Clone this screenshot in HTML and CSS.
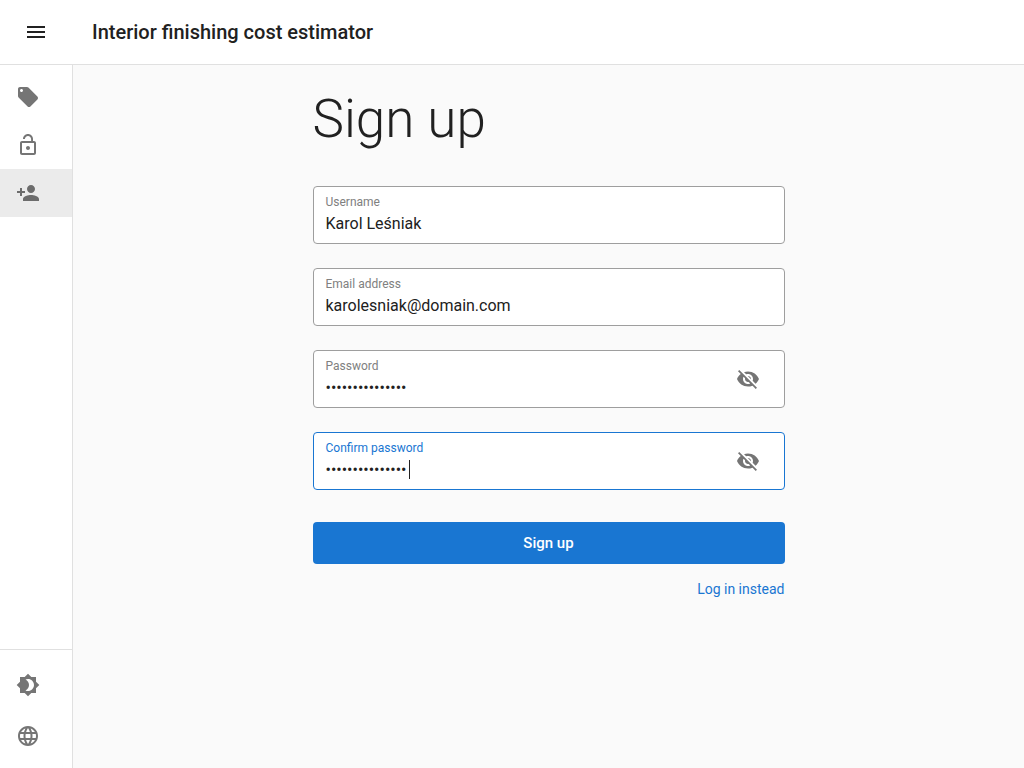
FILE: index.html
```html
<!DOCTYPE html>
<html lang="en">
<head>
<meta charset="utf-8">
<meta name="viewport" content="width=device-width, initial-scale=1">
<title>Interior finishing cost estimator</title>
<link rel="stylesheet" href="styles.css">
</head>
<body>
<header class="topbar">
  <button class="icon-button" type="button" aria-label="Toggle menu">
    <svg class="icon" viewBox="0 0 24 24"><path d="M3 18h18v-2H3v2zm0-5h18v-2H3v2zm0-7v2h18V6H3z"/></svg>
  </button>
  <div class="topbar-title">Interior finishing cost estimator</div>
</header>
<div class="shell">
  <nav class="rail" aria-label="Main">
    <div class="rail-group rail-main">
      <a class="rail-item" href="#prices" aria-label="Prices">
        <svg class="icon" viewBox="0 0 24 24"><path d="M21.41 11.58l-9-9C12.05 2.22 11.55 2 11 2H4c-1.1 0-2 .9-2 2v7c0 .55.22 1.05.59 1.42l9 9c.36.36.86.58 1.41.58s1.05-.22 1.41-.59l7-7c.37-.36.59-.86.59-1.41s-.23-1.06-.59-1.42zM5.5 7C4.67 7 4 6.33 4 5.5S4.67 4 5.5 4 7 4.67 7 5.5 6.33 7 5.5 7z"/></svg>
      </a>
      <a class="rail-item" href="#login" aria-label="Log in">
        <svg class="icon" viewBox="0 0 24 24"><path d="M12 17c1.1 0 2-.9 2-2s-.9-2-2-2-2 .9-2 2 .9 2 2 2zm6-9h-1V6c0-2.76-2.24-5-5-5S7 3.24 7 6h1.900c0-1.710 1.390-3.100 3.100-3.100s3.100 1.390 3.100 3.100v2H6c-1.100 0-2 .9-2 2v10c0 1.100.9 2 2 2h12c1.100 0 2-.9 2-2V10c0-1.100-.9-2-2-2zm0 12H6V10h12v10z"/></svg>
      </a>
      <a class="rail-item rail-item-active" href="#signup" aria-label="Sign up">
        <svg class="icon" viewBox="0 0 24 24"><path d="M15 12c2.210 0 4-1.790 4-4s-1.790-4-4-4-4 1.790-4 4 1.790 4 4 4zm-9-2V7H4v3H1v2h3v3h2v-3h3v-2H6zm9 4c-2.670 0-8 1.340-8 4v2h16v-2c0-2.660-5.330-4-8-4z"/></svg>
      </a>
    </div>
    <div class="rail-group rail-bottom">
      <button class="rail-item" type="button" aria-label="Switch theme">
        <svg class="icon" viewBox="0 0 24 24"><path d="M20 8.690V4h-4.690L12 .690 8.690 4H4v4.690L.690 12 4 15.310V20h4.690L12 23.310 15.310 20H20v-4.690L23.310 12 20 8.690zM12 18c-.890 0-1.740-.200-2.500-.550C11.560 16.500 13 14.420 13 12s-1.440-4.500-3.500-5.450C10.260 6.200 11.110 6 12 6c3.310 0 6 2.690 6 6s-2.690 6-6 6z"/></svg>
      </button>
      <button class="rail-item" type="button" aria-label="Language">
        <svg class="icon" viewBox="0 0 24 24"><path d="M11.990 2C6.470 2 2 6.480 2 12s4.470 10 9.990 10C17.520 22 22 17.520 22 12S17.520 2 11.990 2zm6.930 6h-2.950c-.320-1.250-.780-2.450-1.380-3.560 1.840.630 3.370 1.910 4.330 3.560zM12 4.040c.830 1.200 1.480 2.530 1.910 3.960h-3.820c.430-1.430 1.080-2.760 1.910-3.960zM4.260 14C4.100 13.360 4 12.690 4 12s.100-1.360.260-2h3.380c-.080.660-.140 1.320-.140 2 0 .680.060 1.340.140 2H4.260zm.820 2h2.950c.320 1.250.780 2.450 1.380 3.560-1.840-.630-3.370-1.900-4.330-3.560zm2.950-8H5.080c.960-1.660 2.490-2.930 4.330-3.560C8.810 5.550 8.350 6.750 8.030 8zM12 19.960c-.830-1.200-1.480-2.530-1.910-3.960h3.820c-.430 1.430-1.080 2.760-1.910 3.960zM14.340 14H9.660c-.090-.660-.160-1.320-.160-2 0-.680.070-1.350.160-2h4.680c.090.650.160 1.320.160 2 0 .680-.070 1.340-.160 2zm.250 5.560c.600-1.110 1.060-2.310 1.380-3.560h2.950c-.960 1.650-2.490 2.930-4.330 3.560zM16.360 14c.080-.660.140-1.320.140-2 0-.680-.060-1.340-.140-2h3.380c.160.640.260 1.310.260 2s-.100 1.360-.260 2h-3.380z"/></svg>
      </button>
    </div>
  </nav>
  <main class="content">
    <form class="signup">
      <h1 class="heading">Sign up</h1>
      <div class="field">
        <div class="field-text">
          <label class="field-label" for="username">Username</label>
          <input class="field-input" id="username" type="text" value="Karol Leśniak">
        </div>
      </div>
      <div class="field">
        <div class="field-text">
          <label class="field-label" for="email">Email address</label>
          <input class="field-input" id="email" type="email" value="karolesniak@domain.com">
        </div>
      </div>
      <div class="field">
        <div class="field-text">
          <label class="field-label" for="password">Password</label>
          <input class="field-input" id="password" type="password" value="abcdefghijklmno">
        </div>
        <button class="icon-button icon-button-muted" type="button" aria-label="Show password">
          <svg class="icon" viewBox="0 0 24 24"><path d="M12 7c2.760 0 5 2.240 5 5 0 .650-.130 1.260-.360 1.830l2.920 2.920c1.510-1.260 2.700-2.890 3.430-4.750-1.730-4.390-6-7.500-11-7.500-1.400 0-2.740.250-3.980.700l2.160 2.160C10.740 7.130 11.350 7 12 7zM2 4.270l2.280 2.280.460.460C3.080 8.300 1.780 10.020 1 12c1.730 4.390 6 7.500 11 7.500 1.550 0 3.030-.300 4.380-.840l.420.420L19.730 22 21 20.730 3.270 3 2 4.270zM7.530 9.800l1.550 1.550c-.050.210-.080.430-.080.650 0 1.660 1.340 3 3 3 .220 0 .440-.030.650-.080l1.550 1.550c-.670.330-1.410.530-2.200.530-2.760 0-5-2.240-5-5 0-.790.200-1.530.530-2.200zm4.310-.780l3.150 3.150.020-.160c0-1.660-1.340-3-3-3l-.170.010z"/></svg>
        </button>
      </div>
      <div class="field field-focused">
        <div class="field-text">
          <label class="field-label" for="confirm">Confirm password</label>
          <input class="field-input" id="confirm" type="password" value="abcdefghijklmno" autofocus>
          <span class="caret" id="caret" aria-hidden="true"></span>
        </div>
        <button class="icon-button icon-button-muted" type="button" aria-label="Show password confirmation">
          <svg class="icon" viewBox="0 0 24 24"><path d="M12 7c2.760 0 5 2.240 5 5 0 .650-.130 1.260-.360 1.830l2.920 2.920c1.510-1.260 2.700-2.890 3.430-4.750-1.730-4.390-6-7.500-11-7.500-1.400 0-2.740.250-3.980.700l2.160 2.160C10.740 7.130 11.350 7 12 7zM2 4.270l2.280 2.280.460.460C3.080 8.300 1.780 10.020 1 12c1.730 4.390 6 7.500 11 7.500 1.550 0 3.030-.300 4.380-.840l.420.420L19.730 22 21 20.730 3.270 3 2 4.270zM7.530 9.800l1.550 1.550c-.050.210-.080.430-.080.650 0 1.660 1.340 3 3 3 .220 0 .440-.030.650-.080l1.550 1.550c-.670.330-1.410.530-2.200.530-2.760 0-5-2.240-5-5 0-.790.200-1.530.530-2.200zm4.310-.780l3.150 3.150.020-.160c0-1.660-1.340-3-3-3l-.170.010z"/></svg>
        </button>
      </div>
      <div class="actions">
        <button class="submit" type="submit">Sign up</button>
        <a class="login-link" href="#login">Log in instead</a>
      </div>
    </form>
  </main>
</div>
<script src="script.js"></script>
</body>
</html>
```

FILE: styles.css
```css
* { box-sizing: border-box; }

body {
  margin: 0;
  min-height: 100vh;
  display: flex;
  flex-direction: column;
  background: #fafafa;
  color: #212121;
  font-family: Roboto, "Liberation Sans", sans-serif;
  font-size: 16px;
}

button { font-family: inherit; border: 0; cursor: pointer; }

.icon { display: block; width: 24px; height: 24px; fill: currentColor; }

.topbar {
  display: flex;
  align-items: center;
  gap: 32px;
  min-height: 65px;
  padding: 0 12px;
  background: #fff;
  border-bottom: 1px solid #e0e0e0;
}

.topbar-title { font-size: 20px; font-weight: 500; line-height: 32px; }

.icon-button { padding: 12px; background: transparent; color: #212121; border-radius: 50%; }
.icon-button-muted { color: #757575; }

.shell { flex: 1; display: flex; }

.rail {
  display: flex;
  flex-direction: column;
  justify-content: space-between;
  width: 73px;
  background: #fff;
  border-right: 1px solid #e0e0e0;
}

.rail-group { display: flex; flex-direction: column; padding: 8px 0; }
.rail-bottom { padding-top: 11px; border-top: 1px solid #e0e0e0; gap: 3px; }

.rail-item {
  display: block;
  padding: 12px 16px;
  background: transparent;
  color: #757575;
}
.rail-item-active { background: #ebebeb; color: #6c6c6c; }

.content { flex: 1; padding: 24px; }

.signup {
  display: flex;
  flex-direction: column;
  gap: 24px;
  max-width: 472px;
  margin: 0 auto;
}

.heading { margin: 0 0 12px; font-size: 53px; font-weight: 300; line-height: 61px; }

.field {
  display: flex;
  align-items: center;
  min-height: 58px;
  padding: 0 12px;
  background: #fff;
  border: 1px solid #9e9e9e;
  border-radius: 4px;
}
.field-focused { border-color: #1976d2; }

.field-text { position: relative; flex: 1; display: flex; flex-direction: column; gap: 2px; }
.field-label { font-size: 12px; line-height: 14px; color: #808080; }
.field-focused .field-label { color: #1976d2; }

.field-input {
  width: 100%;
  height: 24px;
  padding: 0;
  border: 0;
  outline: 0;
  background: transparent;
  color: #212121;
  font-family: inherit;
  font-size: 16px;
}

/* Steady caret shown after the filled-in value until the field is edited */
.caret {
  position: absolute;
  left: 83px;
  bottom: 2px;
  width: 1px;
  height: 19px;
  background: #212121;
  pointer-events: none;
}

.actions {
  display: flex;
  flex-direction: column;
  gap: 15px;
  margin-top: 8px;
}

.submit {
  min-height: 42px;
  border-radius: 4px;
  background: #1976d2;
  color: #fff;
  font-size: 15px;
  font-weight: 500;
}

.login-link {
  align-self: flex-end;
  color: #1976d2;
  font-size: 14px;
  line-height: 20px;
  text-decoration: none;
}
```

FILE: script.js
```js
const confirmInput = document.getElementById("confirm");
const caret = document.getElementById("caret");
confirmInput.focus();
confirmInput.setSelectionRange(confirmInput.value.length, confirmInput.value.length);
["input", "blur", "keydown"].forEach((type) => {
  confirmInput.addEventListener(type, () => { caret.hidden = true; caret.style.display = "none"; });
});
```
